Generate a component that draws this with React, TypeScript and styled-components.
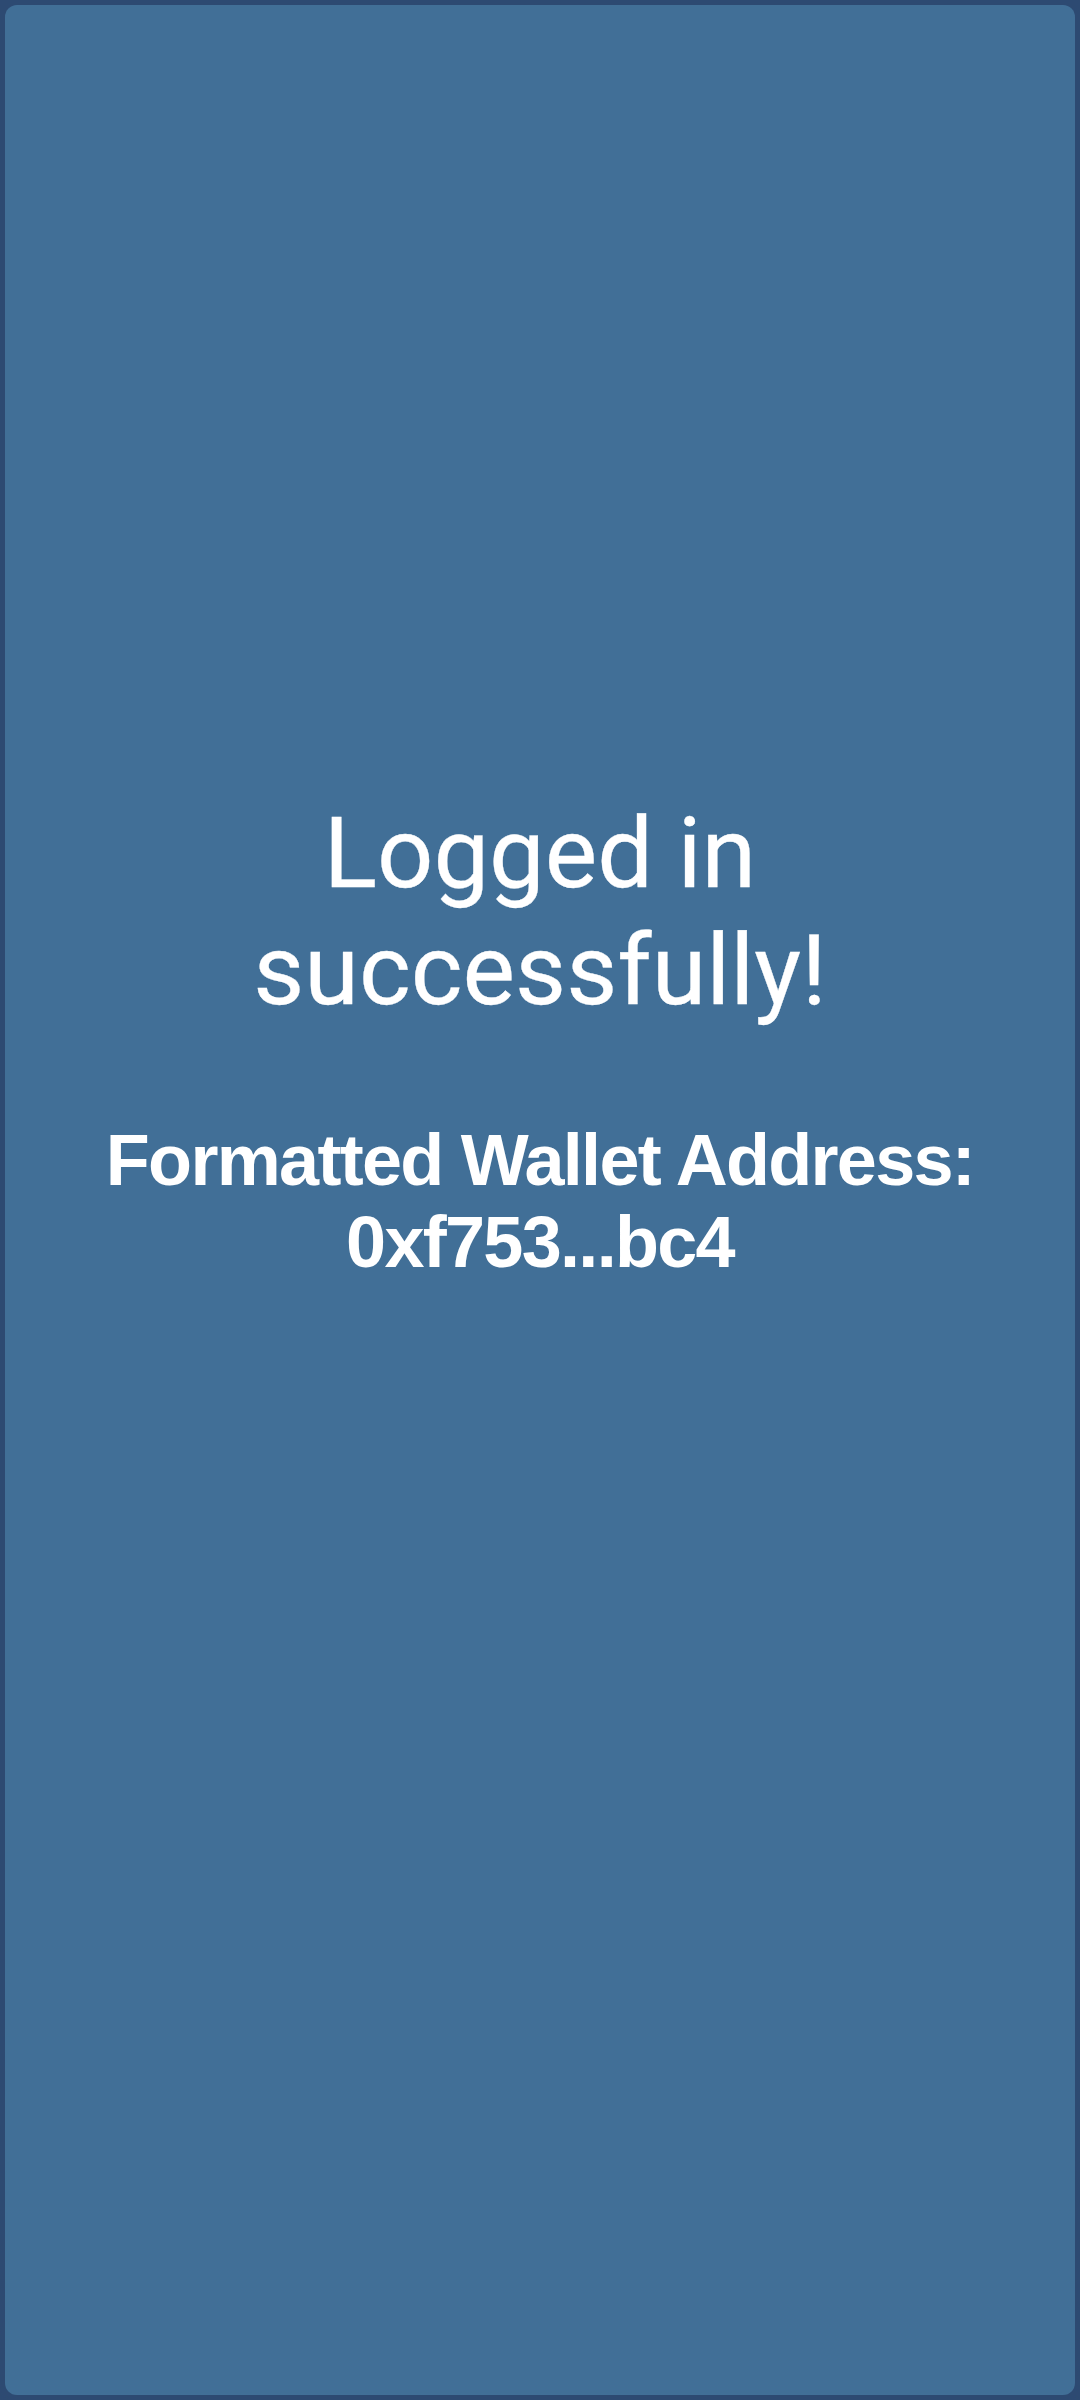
import React from "react";
import styled, { createGlobalStyle } from "styled-components";

const Global = createGlobalStyle`
  html, body { margin: 0; padding: 0; background: #2d4a72; }
  #root { width: 1080px; height: 2400px; }
`;

const Frame = styled.div`
  box-sizing: border-box;
  width: 1080px;
  height: 2400px;
  background: #2d4a72;
  padding: 5px;
`;

const Panel = styled.main`
  box-sizing: border-box;
  height: 100%;
  background: #416f97;
  border-radius: 12px;
  display: flex;
  flex-direction: column;
  align-items: center;
  padding-top: 790px;
  color: #ffffff;
  text-align: center;
`;

const Title = styled.h1`
  margin: 0;
  font-family: Roboto, "Noto Sans", sans-serif;
  font-weight: 400;
  font-size: 99px;
  line-height: 117px;
  width: 800px;
  -webkit-text-stroke: 0.3px #ffffff;
`;

const Address = styled.p`
  margin: 90px 0 0;
  font-family: "Liberation Sans", Arial, sans-serif;
  font-weight: 700;
  font-size: 72px;
  line-height: 82px;
  letter-spacing: -1.7px;
`;

export default function App() {
  return (
    <>
      <Global />
      <Frame>
        <Panel>
          <Title>Logged in successfully!</Title>
          <Address>
            Formatted Wallet Address:
            <br />
            0xf753...bc4
          </Address>
        </Panel>
      </Frame>
    </>
  );
}
